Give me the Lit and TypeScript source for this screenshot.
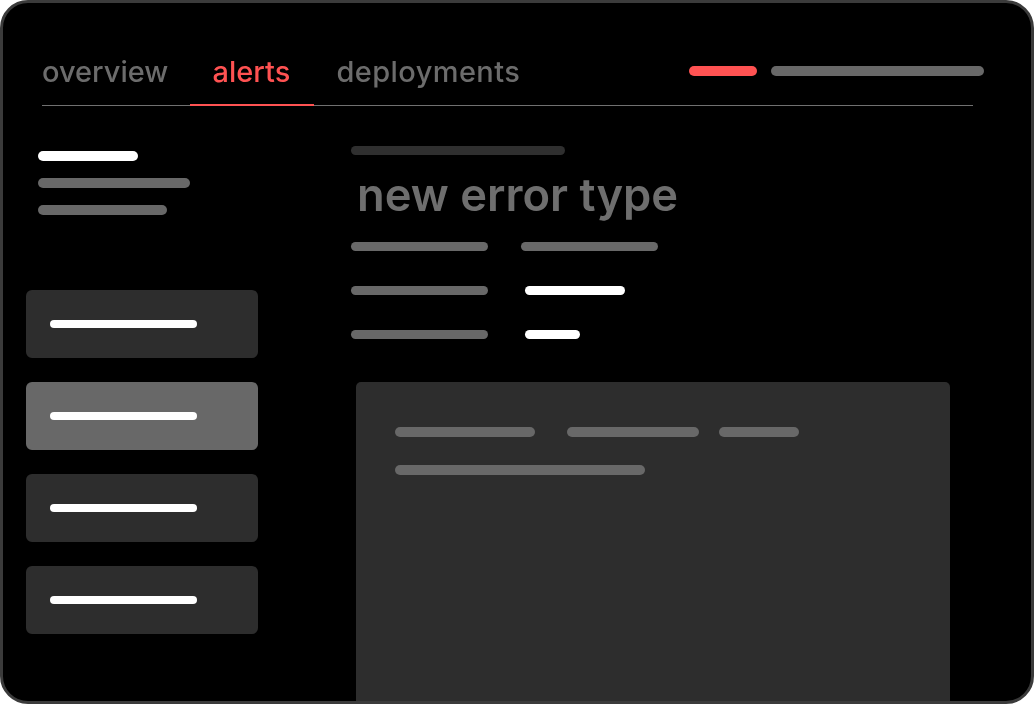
import { LitElement, html, css } from "lit";
import { customElement } from "lit/decorators.js";

const tabs = [
  { label: "overview", active: false },
  { label: "alerts", active: true },
  { label: "deployments", active: false },
];

// placeholder bars are [width, tone]
const sideBars: [number, string][] = [
  [100, "white"],
  [152, "gray"],
  [129, "gray"],
];
const rows: [number, number, string, number][] = [
  [137, 137, "gray", 33],
  [137, 100, "white", 37],
  [137, 55, "white", 37],
];

@customElement("app-root")
export class AppRoot extends LitElement {
  static styles = css`
    :host {
      display: block;
      width: 1034px;
      height: 705px;
      background: #fff;
      font-family: Inter, "Liberation Sans", sans-serif;
    }
    .frame {
      box-sizing: border-box;
      width: 1034px;
      height: 704px;
      display: flex;
      flex-direction: column;
      background: #000;
      border: 3px solid #3b3b3b;
      border-radius: 28px;
      overflow: hidden;
    }
    .bar {
      display: block;
      height: 9.5px;
      border-radius: 5px;
      background: #686868;
    }
    .bar.white {
      background: #fff;
    }
    .bar.red {
      background: #ff5252;
    }
    .bar.dim {
      background: #2f2f2f;
    }
    header {
      flex: none;
      display: flex;
      align-items: flex-end;
      box-sizing: border-box;
      height: 102.5px;
      width: 931px;
      margin-left: 39px;
      border-bottom: 1.5px solid #707070;
    }
    .tab {
      padding: 0 22px 13.5px 21.5px;
      margin-bottom: -1px;
      border-bottom: 2.5px solid transparent;
      font-size: 29px;
      line-height: 36px;
      font-weight: 550;
      color: #6c6c6c;
      will-change: transform;
    }
    .tab:first-child {
      padding-left: 0;
    }
    .tab.active {
      padding-left: 22.5px;
      padding-right: 24px;
      color: #ff5252;
      border-bottom-color: #ff5252;
    }
    .tab:nth-child(3) {
      letter-spacing: 0.4px;
    }
    .status {
      display: flex;
      gap: 14px;
      margin: 0 -11px 29px auto;
    }
    .body {
      flex: 1;
      min-height: 0;
      display: flex;
      padding-left: 23px;
    }
    .side {
      flex: none;
      width: 232px;
      margin-right: 93px;
      padding-top: 45.5px;
    }
    .side-bars {
      display: flex;
      flex-direction: column;
      gap: 17.5px;
      margin: 0 0 75.5px 12px;
    }
    .cards {
      display: flex;
      flex-direction: column;
      gap: 24px;
    }
    .card {
      display: flex;
      align-items: center;
      height: 68px;
      padding-left: 24px;
      border-radius: 6px;
      background: #2d2d2d;
    }
    .card.selected {
      background: #686868;
    }
    .card .bar {
      height: 7.5px;
    }
    main {
      flex: 1;
      display: flex;
      flex-direction: column;
      padding-top: 40px;
    }
    h1 {
      margin: 12px 0 18.5px 6px;
      font-size: 45.3px;
      line-height: 56px;
      font-weight: 600;
      color: #6e6e6e;
      will-change: transform;
    }
    .rows {
      display: flex;
      flex-direction: column;
      gap: 34.5px;
    }
    .row {
      display: flex;
    }
    .panel {
      flex: 1;
      width: 594px;
      margin: 43px 0 0 5px;
      padding: 45px 39px;
      box-sizing: border-box;
      border-radius: 5px 5px 0 0;
      background: #2d2d2d;
    }
    .panel-line {
      display: flex;
      margin-bottom: 28.5px;
    }
  `;

  render() {
    return html`<div class="frame">
      <header>
        ${tabs.map(
          (t) => html`<div class="tab ${t.active ? "active" : ""}">${t.label}</div>`
        )}
        <div class="status">
          ${this.bar(68, "red")} ${this.bar(213, "")}
        </div>
      </header>
      <div class="body">
        <div class="side">
          <div class="side-bars">
            ${sideBars.map(([w, tone]) => this.bar(w, tone))}
          </div>
          <div class="cards">
            ${[false, true, false, false].map(
              (selected) => html`<div class="card ${selected ? "selected" : ""}">
                ${this.bar(147, "white")}
              </div>`
            )}
          </div>
        </div>
        <main>
          ${this.bar(214, "dim")}
          <h1>new error type</h1>
          <div class="rows">
            ${rows.map(
              ([a, b, tone, gap]) => html`<div class="row">
                ${this.bar(a, "")}
                <span style="width:${gap}px"></span>
                ${this.bar(b, tone)}
              </div>`
            )}
          </div>
          <div class="panel">
            <div class="panel-line">
              ${this.bar(140, "")}
              <span style="width:32px"></span>
              ${this.bar(132, "")}
              <span style="width:20px"></span>
              ${this.bar(80, "")}
            </div>
            <div class="panel-line">${this.bar(250, "")}</div>
          </div>
        </main>
      </div>
    </div>`;
  }

  private bar(width: number, tone: string) {
    return html`<span class="bar ${tone}" style="width:${width}px"></span>`;
  }
}
